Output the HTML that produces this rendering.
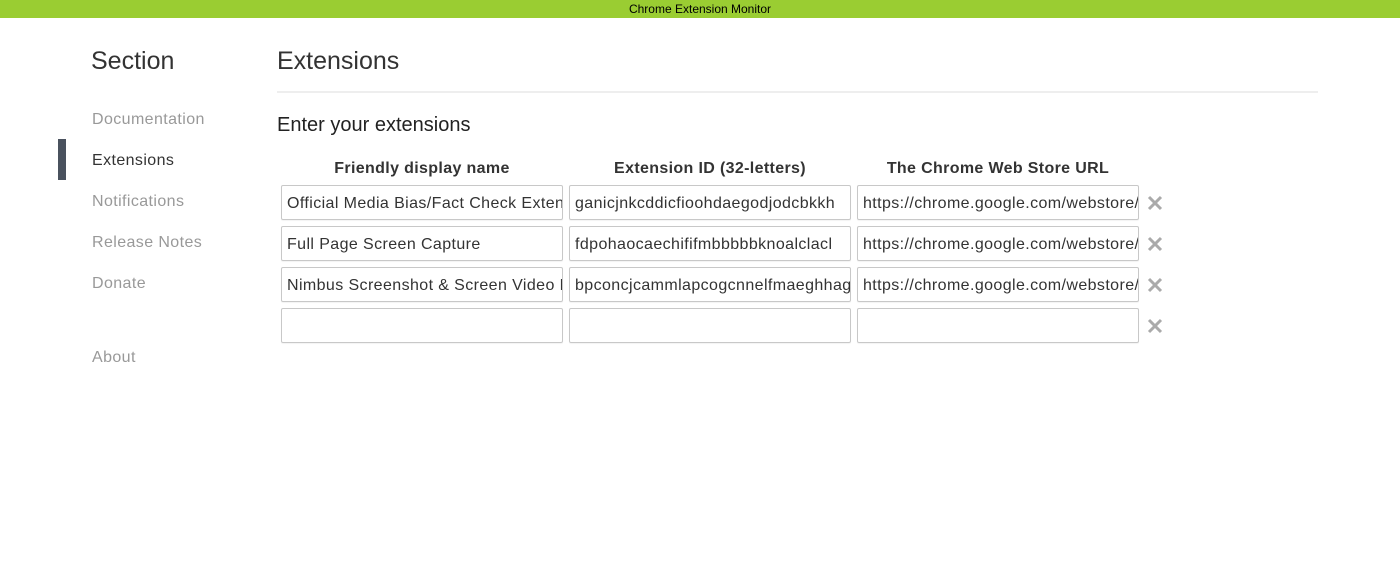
<!DOCTYPE html>
<html><head><meta charset="utf-8"><style>
body{margin:0;width:1400px;height:578px;background:#fff;font-family:"Liberation Sans",Arial,sans-serif;position:relative;overflow:hidden}
.bar{position:absolute;left:0;top:0;width:1400px;height:18px;background:#9acd32;color:#000;font-size:12px;line-height:18px;text-align:center}
.a{position:absolute;white-space:nowrap}
.nav{font-size:16px;color:#999;letter-spacing:0.4px}
.inp{position:absolute;border:1px solid #c8c8c8;border-radius:2px;box-sizing:border-box;width:282px;height:35px;font-size:16px;color:#333;line-height:35px;padding-left:5px;overflow:hidden;white-space:nowrap;letter-spacing:0.4px;box-shadow:0 1px 1px rgba(0,0,0,.05)}
.th{font-size:16px;font-weight:bold;color:#333;text-align:center;width:282px;letter-spacing:0.35px}
.x{position:absolute;left:1146px;width:18px;height:18px}
</style></head><body>
<div class="bar">Chrome Extension Monitor</div>
<div class="a" style="left:91px;top:47px;font-size:25px;color:#333">Section</div>
<div class="a" style="left:277px;top:47px;font-size:25px;color:#333">Extensions</div>
<div class="a" style="left:277px;top:91px;width:1041px;height:2px;background:#eee"></div>
<div class="a nav" style="left:92px;top:111px">Documentation</div>
<div class="a" style="left:58px;top:139px;width:8px;height:41px;background:#4a525e"></div>
<div class="a nav" style="left:92px;top:152px;color:#333">Extensions</div>
<div class="a nav" style="left:92px;top:193px">Notifications</div>
<div class="a nav" style="left:92px;top:234px">Release Notes</div>
<div class="a nav" style="left:92px;top:275px">Donate</div>
<div class="a nav" style="left:92px;top:349px">About</div>
<div class="a" style="left:277px;top:114px;font-size:20px;color:#222">Enter your extensions</div>
<div class="a th" style="left:281px;top:160px">Friendly display name</div>
<div class="a th" style="left:569px;top:160px">Extension ID (32-letters)</div>
<div class="a th" style="left:857px;top:160px">The Chrome Web Store URL</div>

<div class="inp" style="left:281px;top:185px">Official Media Bias/Fact Check Extension</div>
<div class="inp" style="left:569px;top:185px">ganicjnkcddicfioohdaegodjodcbkkh</div>
<div class="inp" style="left:857px;top:185px">https://chrome.google.com/webstore/detail</div>
<div class="inp" style="left:281px;top:226px">Full Page Screen Capture</div>
<div class="inp" style="left:569px;top:226px">fdpohaocaechififmbbbbbknoalclacl</div>
<div class="inp" style="left:857px;top:226px">https://chrome.google.com/webstore/detail</div>
<div class="inp" style="left:281px;top:267px">Nimbus Screenshot &amp; Screen Video Recorder</div>
<div class="inp" style="left:569px;top:267px">bpconcjcammlapcogcnnelfmaeghhagj</div>
<div class="inp" style="left:857px;top:267px">https://chrome.google.com/webstore/detail</div>
<div class="inp" style="left:281px;top:308px"></div>
<div class="inp" style="left:569px;top:308px"></div>
<div class="inp" style="left:857px;top:308px"></div>

<svg class="x" style="top:194px" viewBox="0 0 18 18"><path d="M3 3L15 15M15 3L3 15" stroke="#aaa" stroke-width="3"/></svg>
<svg class="x" style="top:235px" viewBox="0 0 18 18"><path d="M3 3L15 15M15 3L3 15" stroke="#aaa" stroke-width="3"/></svg>
<svg class="x" style="top:276px" viewBox="0 0 18 18"><path d="M3 3L15 15M15 3L3 15" stroke="#aaa" stroke-width="3"/></svg>
<svg class="x" style="top:317px" viewBox="0 0 18 18"><path d="M3 3L15 15M15 3L3 15" stroke="#aaa" stroke-width="3"/></svg>
</body></html>
